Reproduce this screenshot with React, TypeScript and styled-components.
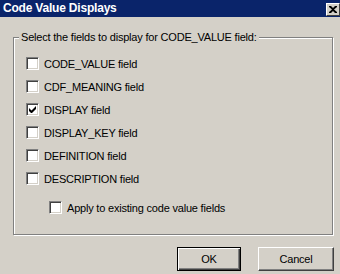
import styled, { createGlobalStyle } from "styled-components";

const fields = [
  { label: "CODE_VALUE field", checked: false },
  { label: "CDF_MEANING field", checked: false },
  { label: "DISPLAY field", checked: true },
  { label: "DISPLAY_KEY field", checked: false },
  { label: "DEFINITION field", checked: false },
  { label: "DESCRIPTION field", checked: false },
];

export default function App() {
  return (
    <>
      <GlobalStyle />
      <Dialog>
        <TitleBar>
          <Title>Code Value Displays</Title>
          <CloseButton aria-label="Close">
            <svg width="8" height="7" viewBox="0 0 8 7">
              <path
                d="M0 0h2l2 2 2-2h2v1L5 3.5 8 6v1H6L4 5 2 7H0V6l3-2.5L0 1z"
                fill="#000"
              />
            </svg>
          </CloseButton>
        </TitleBar>
        <Body>
          <Group>
            <Legend>Select the fields to display for CODE_VALUE field:</Legend>
            <FieldList>
              {fields.map((f) => (
                <CheckRow key={f.label}>
                  <CheckBox checked={f.checked} />
                  <RowLabel>{f.label}</RowLabel>
                </CheckRow>
              ))}
              <CheckRow $indent>
                <CheckBox checked={false} />
                <RowLabel>Apply to existing code value fields</RowLabel>
              </CheckRow>
            </FieldList>
          </Group>
          <ButtonBar>
            <Button $default $width={64}>
              OK
            </Button>
            <Button $width={76}>Cancel</Button>
          </ButtonBar>
        </Body>
      </Dialog>
    </>
  );
}

function CheckBox({ checked }: { checked: boolean }) {
  return (
    <Box>
      {checked && (
        <svg width="7" height="7" viewBox="0 0 7 7">
          <path d="M0 2v3l2 2h1l4-4V0L2.5 4.5z" fill="#000" />
        </svg>
      )}
    </Box>
  );
}

const GlobalStyle = createGlobalStyle`
  html, body {
    margin: 0;
    padding: 0;
    background: #d4d0c8;
  }
  body {
    font-family: "Liberation Sans", Arial, sans-serif;
    font-size: 11px;
    letter-spacing: -0.2px;
    color: #000;
  }
`;

const Dialog = styled.div`
  width: 340px;
  height: 274px;
  background: #d4d0c8;
  display: flex;
  flex-direction: column;
  overflow: hidden;
`;

const TitleBar = styled.div`
  height: 17px;
  background: #0a246a;
  display: flex;
  align-items: center;
  justify-content: space-between;
  padding-left: 3px;
`;

const Title = styled.div`
  color: #fff;
  font-family: "Liberation Sans", Arial, sans-serif;
  font-weight: bold;
  font-size: 12px;
  letter-spacing: -0.2px;
  line-height: 17px;
`;

const CloseButton = styled.div`
  width: 14px;
  height: 13px;
  box-sizing: border-box;
  margin-top: 1px;
  background: #d4d0c8;
  border-top: 1px solid #fff;
  border-left: 1px solid #fff;
  border-right: 1px solid #404040;
  border-bottom: 1px solid #404040;
  display: flex;
  align-items: center;
  justify-content: center;
`;

const Body = styled.div`
  flex: 1;
  padding: 14px 7px 0 13px;
  display: flex;
  flex-direction: column;
`;

const Group = styled.fieldset`
  margin: 0;
  padding: 0;
  width: 320px;
  height: 204px;
  box-sizing: border-box;
  border: 1px solid #808080;
  box-shadow: inset 1px 1px #fff, 1px 1px #fff;
  min-inline-size: 0;
`;

const Legend = styled.legend`
  margin-left: 5px;
  padding: 0 2px;
  line-height: 13px;
  font-size: 11px;
  background: #d4d0c8;
`;

const FieldList = styled.div`
  display: flex;
  flex-direction: column;
  padding: 8px 0 0 12px;
`;

const CheckRow = styled.div<{ $indent?: boolean }>`
  display: flex;
  align-items: center;
  height: 23px;
  margin-left: ${(p) => (p.$indent ? "23px" : "0")};
  margin-top: ${(p) => (p.$indent ? "6px" : "0")};
`;

const Box = styled.div`
  width: 13px;
  height: 13px;
  box-sizing: border-box;
  background: #fff;
  border-top: 1px solid #808080;
  border-left: 1px solid #808080;
  border-right: 1px solid #fff;
  border-bottom: 1px solid #fff;
  box-shadow: inset 1px 1px #404040, inset -1px -1px #d4d0c8;
  display: flex;
  align-items: center;
  justify-content: center;
  flex-shrink: 0;
`;

const RowLabel = styled.span`
  margin-left: 5px;
  white-space: nowrap;
`;

const ButtonBar = styled.div`
  display: flex;
  justify-content: flex-end;
  gap: 17px;
  margin-top: 12px;
  margin-right: -1px;
`;

const Button = styled.div<{ $default?: boolean; $width: number }>`
  width: ${(p) => p.$width}px;
  height: 24px;
  box-sizing: border-box;
  display: flex;
  align-items: center;
  justify-content: center;
  background: #d4d0c8;
  border: 1px solid;
  border-color: ${(p) =>
    p.$default ? "#000" : "#fff #404040 #404040 #fff"};
  box-shadow: ${(p) =>
    p.$default
      ? "inset 1px 1px #fff, inset -1px -1px #404040, inset -2px -2px #808080"
      : "inset -1px -1px #808080"};
`;
